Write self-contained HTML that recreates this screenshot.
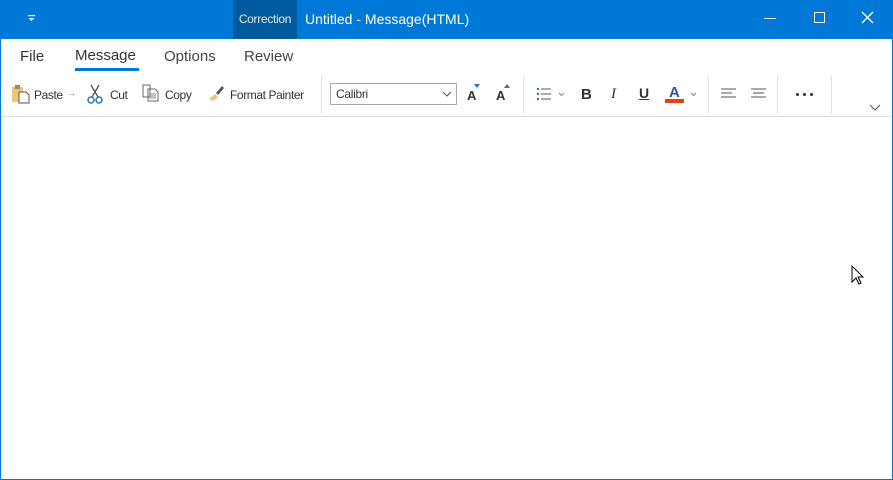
<!DOCTYPE html>
<html><head><style>
*{margin:0;padding:0;box-sizing:border-box}
body{width:893px;height:480px;overflow:hidden;background:#fff;font-family:"Liberation Sans",sans-serif;position:relative}
.win{position:absolute;left:0;top:0;width:893px;height:480px;border:1px solid #0078d7;}
.title{position:absolute;left:0;top:0;width:893px;height:39px;background:#0078d7;color:#fff}
.a{position:absolute;white-space:nowrap}
.t{font-size:12px;color:#333;letter-spacing:-0.4px}
.sep{position:absolute;top:76px;width:1px;height:38px;background:#e1e1e1}
.dot{position:absolute;top:93px;width:3px;height:3px;border-radius:50%;background:#333}
</style></head><body>
<div class="win"></div>
<div class="title">
 <svg class="a" style="left:27px;top:14px" width="10" height="10"><rect x="1" y="1" width="7" height="1.2" fill="#fff"/><path d="M1.5 4 L7.5 4 L4.5 7 Z" fill="#fff"/></svg>
 <div class="a" style="left:233px;top:0;width:64px;height:39px;background:#005a9e;font-size:12px;line-height:38px;text-align:center;color:#dfeaf5;letter-spacing:-0.3px">Correction</div>
 <div class="a" style="left:305px;top:11px;font-size:14px">Untitled - Message(HTML)</div>
 <div class="a" style="left:764px;top:18px;width:12px;height:1px;background:#fff"></div>
 <div class="a" style="left:814px;top:12px;width:11px;height:11px;border:1px solid #fff"></div>
 <svg class="a" style="left:861px;top:11px" width="13" height="13"><path d="M1 1L12 12M12 1L1 12" stroke="#fff" stroke-width="1.3"/></svg>
</div>
<div class="a" style="left:20px;top:48px;font-size:15px;color:#333">File</div>
<div class="a" style="left:75px;top:47px;font-size:15px;color:#333">Message</div>
<div class="a" style="left:75px;top:68px;width:64px;height:3px;background:#0078d7"></div>
<div class="a" style="left:164px;top:48px;font-size:15px;color:#444">Options</div>
<div class="a" style="left:244px;top:48px;font-size:15px;color:#444">Review</div>
<svg class="a" style="left:11px;top:84px" width="20" height="20"><rect x="1" y="3" width="11" height="15" fill="#f2c66d"/><rect x="4" y="1" width="5" height="4" fill="#888"/><path d="M8 8h7l3 3v8H8z" fill="#fff" stroke="#555"/></svg>
<div class="a t" style="left:34px;top:88px">Paste</div>
<div class="a" style="left:67px;top:88px;font-size:9px;color:#777">→</div>
<svg class="a" style="left:86px;top:84px" width="18" height="20"><path d="M5 1L12 13M13 1L6 13" stroke="#555" stroke-width="1.3"/><circle cx="5" cy="16" r="3" fill="none" stroke="#2b73c0" stroke-width="1.5"/><circle cx="13" cy="16" r="3" fill="none" stroke="#2b73c0" stroke-width="1.5"/></svg>
<div class="a t" style="left:110px;top:88px">Cut</div>
<svg class="a" style="left:142px;top:84px" width="18" height="18"><path d="M1 1h7v12H1z M6 5h7l3 3v9H6z" fill="#fff" stroke="#666"/><path d="M8 10h6M8 12h6M8 14h6" stroke="#888"/></svg>
<div class="a t" style="left:165px;top:88px">Copy</div>
<svg class="a" style="left:207px;top:84px" width="18" height="18"><path d="M2 15l6-5 3 3-5 4z" fill="#f2c66d"/><path d="M9 9l6-7 2 2-6 7z" fill="#555"/></svg>
<div class="a t" style="left:230px;top:88px">Format Painter</div>
<div class="sep" style="left:321px"></div>
<div class="a" style="left:330px;top:83px;width:127px;height:22px;border:1px solid #aaa;font-size:12px;padding:3px 5px;color:#333;letter-spacing:-0.3px">Calibri</div>
<svg class="a" style="left:442px;top:91px" width="10" height="6"><path d="M1 1l4 4 4-4" stroke="#555" fill="none"/></svg>
<div class="a" style="left:467px;top:88px;font-size:13px;font-weight:bold;color:#333">A</div>
<div class="a" style="left:474px;top:84px;width:0;height:0;border-left:3px solid transparent;border-right:3px solid transparent;border-top:4px solid #2b73c0"></div>
<div class="a" style="left:496px;top:88px;font-size:13px;font-weight:bold;color:#333">A</div>
<div class="a" style="left:504px;top:84px;width:0;height:0;border-left:3px solid transparent;border-right:3px solid transparent;border-bottom:4px solid #2b73c0"></div>
<div class="sep" style="left:523px"></div>
<svg class="a" style="left:536px;top:86px" width="16" height="16"><circle cx="2" cy="3" r="1.2" fill="#2b73c0"/><circle cx="2" cy="8" r="1.2" fill="#2b73c0"/><circle cx="2" cy="13" r="1.2" fill="#2b73c0"/><path d="M5 3h10M5 8h10M5 13h10" stroke="#555"/></svg>
<svg class="a" style="left:558px;top:92px" width="7" height="5"><path d="M1 1l2.5 2.5 2.5-2.5" stroke="#888" fill="none"/></svg>
<div class="a" style="left:581px;top:86px;font-size:15px;font-weight:bold;color:#333">B</div>
<div class="a" style="left:611px;top:86px;font-size:15px;font-style:italic;font-family:'Liberation Serif';color:#333">I</div>
<div class="a" style="left:639px;top:85px;font-size:14px;text-decoration:underline;color:#333;font-weight:bold">U</div>
<div class="a" style="left:669px;top:84px;font-size:15px;color:#2b5a9c;font-weight:bold">A</div>
<div class="a" style="left:665px;top:99px;width:19px;height:4px;background:#e8420f"></div>
<svg class="a" style="left:690px;top:92px" width="7" height="5"><path d="M1 1l2.5 2.5 2.5-2.5" stroke="#888" fill="none"/></svg>
<div class="sep" style="left:708px"></div>
<svg class="a" style="left:721px;top:88px" width="16" height="12"><path d="M0 1h15M0 5h11M0 9h15" stroke="#555"/></svg>
<svg class="a" style="left:751px;top:88px" width="16" height="12"><path d="M0 1h15M2 5h11M0 9h15" stroke="#555"/></svg>
<div class="sep" style="left:777px"></div>
<div class="dot" style="left:796px"></div><div class="dot" style="left:803px"></div><div class="dot" style="left:810px"></div>
<div class="sep" style="left:831px"></div>
<svg class="a" style="left:869px;top:104px" width="12" height="8"><path d="M1 1l5 5 5-5" stroke="#555" fill="none"/></svg>
<div class="a" style="left:1px;top:116px;width:890px;height:1px;background:#e1e1e1"></div>
<svg class="a" style="left:851px;top:265px" width="14" height="22"><path d="M1 1v16l4-4 3 6 2-1-3-6h5z" fill="#fff" stroke="#000"/></svg>
</body></html>
